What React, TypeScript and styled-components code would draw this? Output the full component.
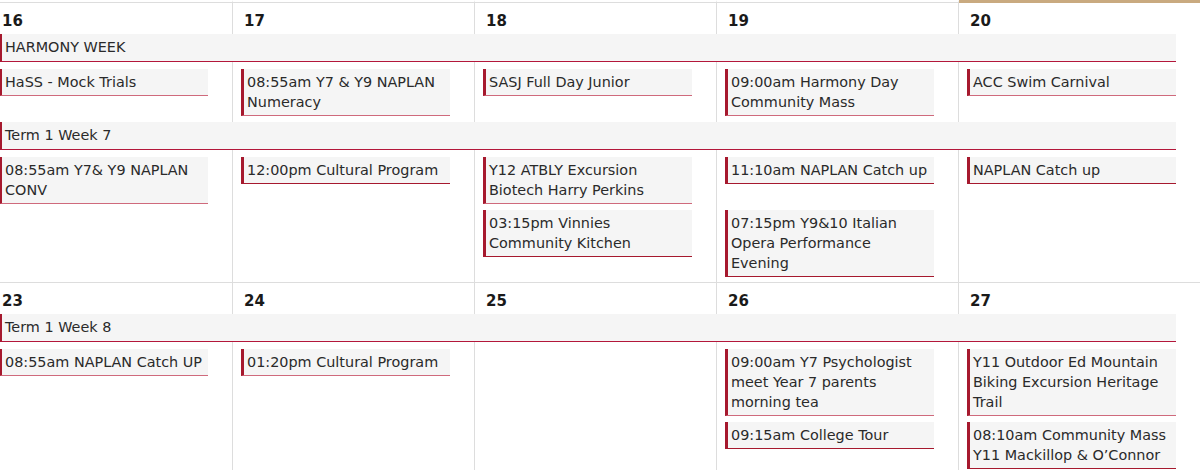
import styled, { createGlobalStyle } from "styled-components";

type Ev = { text: string; soft?: boolean } | null;
type Group = { bar: string; lanes: Ev[][] };
type WeekData = { days: number[]; today?: number; groups: Group[] };

const weeks: WeekData[] = [
  {
    days: [16, 17, 18, 19, 20],
    today: 4,
    groups: [
      {
        bar: "HARMONY WEEK",
        lanes: [
          [
            { text: "HaSS - Mock Trials", soft: true },
            { text: "08:55am Y7 & Y9 NAPLAN\nNumeracy", soft: true },
            { text: "SASJ Full Day Junior", soft: true },
            { text: "09:00am Harmony Day\nCommunity Mass", soft: true },
            { text: "ACC Swim Carnival", soft: true },
          ],
        ],
      },
      {
        bar: "Term 1 Week 7",
        lanes: [
          [
            { text: "08:55am Y7& Y9 NAPLAN\nCONV", soft: true },
            { text: "12:00pm Cultural Program" },
            { text: "Y12 ATBLY Excursion\nBiotech Harry Perkins", soft: true },
            { text: "11:10am NAPLAN Catch up" },
            { text: "NAPLAN Catch up" },
          ],
          [
            null,
            null,
            { text: "03:15pm Vinnies\nCommunity Kitchen" },
            { text: "07:15pm Y9&10 Italian\nOpera Performance\nEvening" },
            null,
          ],
        ],
      },
    ],
  },
  {
    days: [23, 24, 25, 26, 27],
    groups: [
      {
        bar: "Term 1 Week 8",
        lanes: [
          [
            { text: "08:55am NAPLAN Catch UP", soft: true },
            { text: "01:20pm Cultural Program", soft: true },
            null,
            { text: "09:00am Y7 Psychologist\nmeet Year 7 parents\nmorning tea", soft: true },
            { text: "Y11 Outdoor Ed Mountain\nBiking Excursion Heritage\nTrail", soft: true },
          ],
          [
            null,
            null,
            null,
            { text: "09:15am College Tour" },
            { text: "08:10am Community Mass\nY11 Mackillop & O\u2019Connor" },
          ],
        ],
      },
    ],
  },
];

function Week({ week, first }: { week: WeekData; first: boolean }) {
  const rows = 1 + week.groups.reduce((n, g) => n + 1 + g.lanes.length, 0);
  let row = 2;
  const content: React.ReactNode[] = [];

  week.groups.forEach((g, gi) => {
    content.push(
      <Bar key={`b${gi}`} $row={row}>
        {g.bar}
      </Bar>
    );
    row++;
    g.lanes.forEach((lane, li) => {
      const lastLane = li === g.lanes.length - 1;
      const lastGroup = gi === week.groups.length - 1;
      const pt = li === 0 ? 7 : 6;
      const pb = lastLane ? (lastGroup ? 5 : 6) : 0;
      lane.forEach((ev, di) => {
        if (!ev) return;
        content.push(
          <LaneCell key={`l${gi}-${li}-${di}`} $row={row} $col={di + 1} $pt={pt} $pb={pb}>
            <EventCard $soft={!!ev.soft}>{ev.text}</EventCard>
          </LaneCell>
        );
      });
      row++;
    });
  });

  return (
    <WeekGrid $rows={rows}>
      {week.days.map((d, i) => (
        <DayColumn key={`c${d}`} $col={i + 1} $first={first} $today={week.today === i} />
      ))}
      {week.days.map((d, i) => (
        <DayNum key={`n${d}`} $col={i + 1}>
          {d}
        </DayNum>
      ))}
      {content}
    </WeekGrid>
  );
}

export default function App() {
  return (
    <>
      <GlobalStyle />
      <Calendar>
        {weeks.map((w, i) => (
          <Week key={i} week={w} first={i === 0} />
        ))}
      </Calendar>
    </>
  );
}

const GlobalStyle = createGlobalStyle`
  html, body {
    margin: 0;
    padding: 0;
    background: #fff;
    overflow: hidden;
  }
  body {
    font-family: "DejaVu Sans", Verdana, sans-serif;
    color: #2a2a2a;
  }
`;

const Calendar = styled.div`
  width: 1210px;
  margin-left: -9px;
  padding-top: 2px;
  display: flex;
  flex-direction: column;
`;

const WeekGrid = styled.div<{ $rows: number }>`
  display: grid;
  grid-template-columns: repeat(5, 242px);
  grid-template-rows: repeat(${(p) => p.$rows}, auto);
`;

const DayColumn = styled.div<{ $col: number; $first: boolean; $today: boolean }>`
  grid-column: ${(p) => p.$col};
  grid-row: 1 / -1;
  box-sizing: border-box;
  border-right: 1px solid #dddddd;
  ${(p) =>
    p.$today
      ? "margin-top: -2px; border-top: 3px solid #c9aa80;"
      : p.$first
      ? "margin-top: -2px; border-top: 3px solid transparent; background: linear-gradient(#ddd, #ddd) 0 2px / 100% 1px no-repeat border-box;"
      : "border-top: 1px solid #dddddd;"}
`;

const DayNum = styled.div<{ $col: number }>`
  grid-column: ${(p) => p.$col};
  grid-row: 1;
  padding: 9px 11px 3px;
  font-size: 15px;
  line-height: 20px;
  font-weight: bold;
  color: #1a1a1a;
`;

const Bar = styled.div<{ $row: number }>`
  grid-column: 1 / -1;
  grid-row: ${(p) => p.$row};
  margin: 0 25px 0 8px;
  padding: 3px 3px 4px;
  background: #f5f5f5;
  border-left: 3px solid #a6192e;
  border-bottom: 1px solid #b3173a;
  font-size: 14.4px;
  line-height: 20px;
  white-space: pre;
`;

const LaneCell = styled.div<{ $row: number; $col: number; $pt: number; $pb: number }>`
  grid-column: ${(p) => p.$col};
  grid-row: ${(p) => p.$row};
  padding: ${(p) => `${p.$pt}px 25px ${p.$pb}px 8px`};
`;

const EventCard = styled.div<{ $soft: boolean }>`
  padding: 3px 3px 3px;
  background: #f5f5f5;
  border-left: 3px solid #a6192e;
  border-bottom: 1px solid ${(p) => (p.$soft ? "#cf6a7c" : "#a6192e")};
  font-size: 14.4px;
  line-height: 20px;
  white-space: pre;
  overflow: hidden;
`;
